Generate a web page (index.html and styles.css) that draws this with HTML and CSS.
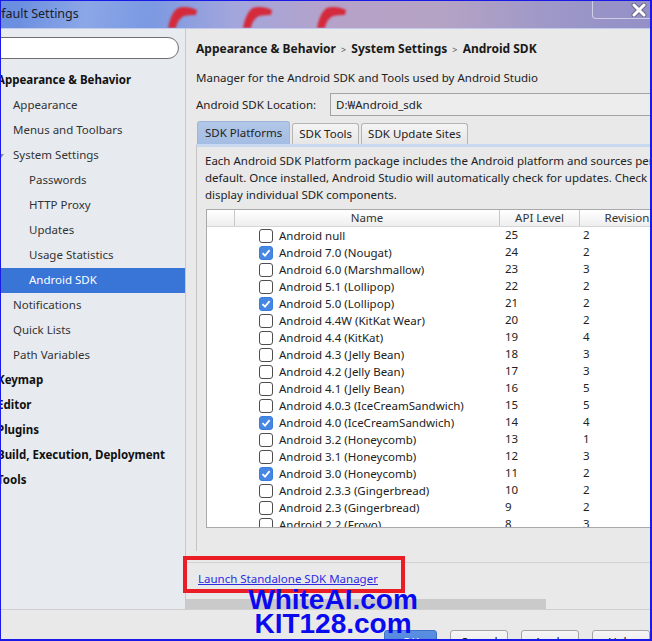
FILE: index.html
```html
<!DOCTYPE html>
<html lang="en">
<head>
    <meta charset="UTF-8">
    <title>Default Settings</title>
    <link rel="stylesheet" href="styles.css">
</head>
<body>
    <div class="window">
        <div class="titlebar">
            <svg class="birds" width="652" height="28" viewBox="0 0 652 28">
                <defs>
                    <filter id="soft"><feGaussianBlur stdDeviation="1"/></filter>
                    <path id="bird" d="M30 9 C24 6 16 5 11 7 C6 10 3 17 1 27 L9 27 C10 21 13 17 17 15 C21 14 25 14 29 14 Z"/>
                </defs>
                <g fill="#d42a3a" filter="url(#soft)">
                    <use href="#bird" x="166"/>
                    <use href="#bird" x="241"/>
                    <use href="#bird" x="315"/>
                </g>
            </svg>
            <span class="title">Default Settings</span>
            <div class="close">
                <svg width="20" height="14" viewBox="0 0 20 14">
                    <path d="M5 2 L15 12 M15 2 L5 12" stroke="#6b6b8a" stroke-width="5" stroke-linecap="round"/>
                    <path d="M5 2 L15 12 M15 2 L5 12" stroke="#ffffff" stroke-width="3" stroke-linecap="round"/>
                </svg>
            </div>
        </div>

        <div class="main">
            <div class="sidebar">
                <div class="search"></div>
                <div class="tree">
                    <div class="node top">Appearance &amp; Behavior</div>
                    <div class="node lvl1">Appearance</div>
                    <div class="node lvl1">Menus and Toolbars</div>
                    <div class="node lvl1"><span class="arrow"></span>System Settings</div>
                    <div class="node lvl2">Passwords</div>
                    <div class="node lvl2">HTTP Proxy</div>
                    <div class="node lvl2">Updates</div>
                    <div class="node lvl2">Usage Statistics</div>
                    <div class="node lvl2 selected">Android SDK</div>
                    <div class="node lvl1">Notifications</div>
                    <div class="node lvl1">Quick Lists</div>
                    <div class="node lvl1">Path Variables</div>
                    <div class="node top">Keymap</div>
                    <div class="node top">Editor</div>
                    <div class="node top">Plugins</div>
                    <div class="node top">Build, Execution, Deployment</div>
                    <div class="node top">Tools</div>
                </div>
            </div>

            <div class="content">
                <div class="crumb">Appearance &amp; Behavior <span class="sep">&gt;</span> System Settings <span class="sep">&gt;</span> Android SDK</div>
                <div class="desc">Manager for the Android SDK and Tools used by Android Studio</div>
                <div class="location">
                    <span class="loc-label">Android SDK Location:</span>
                    <div class="loc-input">D:₩Android_sdk</div>
                </div>
                <div class="tabs">
                    <div class="tab active">SDK Platforms</div>
                    <div class="tab">SDK Tools</div>
                    <div class="tab">SDK Update Sites</div>
                </div>
                <div class="panel">
                    <div class="panel-text">
                        Each Android SDK Platform package includes the Android platform and sources pertaining to an API level by<br>
                        default. Once installed, Android Studio will automatically check for updates. Check "show package details" to<br>
                        display individual SDK components.
                    </div>
                    <div class="table">
                        <div class="thead">
                            <div class="th"></div>
                            <div class="th">Name</div>
                            <div class="th">API Level</div>
                            <div class="th">Revision</div>
                        </div>
                        <div class="tbody" id="rows"></div>
                    </div>
                </div>
                <div class="link-row">
                    <a class="link" href="#">Launch Standalone SDK Manager</a>
                </div>
                <div class="hbar"></div>
            </div>
        </div>

        <div class="footer">
            <button class="btn primary">OK</button>
            <button class="btn">Cancel</button>
            <button class="btn">Apply</button>
            <button class="btn">Help</button>
        </div>

        <div class="highlight"></div>
        <div class="watermark">WhiteAI.com<br>KIT128.com</div>
    </div>

    <script>
        // 平台列表
        const platforms = [
            ['Android null', 25, 2, false],
            ['Android 7.0 (Nougat)', 24, 2, true],
            ['Android 6.0 (Marshmallow)', 23, 3, false],
            ['Android 5.1 (Lollipop)', 22, 2, false],
            ['Android 5.0 (Lollipop)', 21, 2, true],
            ['Android 4.4W (KitKat Wear)', 20, 2, false],
            ['Android 4.4 (KitKat)', 19, 4, false],
            ['Android 4.3 (Jelly Bean)', 18, 3, false],
            ['Android 4.2 (Jelly Bean)', 17, 3, false],
            ['Android 4.1 (Jelly Bean)', 16, 5, false],
            ['Android 4.0.3 (IceCreamSandwich)', 15, 5, false],
            ['Android 4.0 (IceCreamSandwich)', 14, 4, true],
            ['Android 3.2 (Honeycomb)', 13, 1, false],
            ['Android 3.1 (Honeycomb)', 12, 3, false],
            ['Android 3.0 (Honeycomb)', 11, 2, true],
            ['Android 2.3.3 (Gingerbread)', 10, 2, false],
            ['Android 2.3 (Gingerbread)', 9, 2, false],
            ['Android 2.2 (Froyo)', 8, 3, false]
        ];

        const tick = '<svg width="10" height="10" viewBox="0 0 10 10"><path d="M1.5 5.2 L4 7.6 L8.6 2.2" fill="none" stroke="#fff" stroke-width="1.8"/></svg>';
        const rows = document.getElementById('rows');

        platforms.forEach(([name, api, rev, checked]) => {
            const row = document.createElement('div');
            row.className = 'tr';
            row.innerHTML = `
                <div class="td"></div>
                <div class="td name"><span class="check${checked ? ' on' : ''}">${checked ? tick : ''}</span>${name}</div>
                <div class="td api">${api}</div>
                <div class="td rev">${rev}</div>`;
            rows.appendChild(row);
        });
    </script>
</body>
</html>
```

FILE: styles.css
```css
* {
    box-sizing: border-box;
}

body {
    margin: 0;
    font-family: "Noto Sans", "Noto Sans CJK KR", sans-serif;
    font-size: 11.5px;
    color: #222;
}

.window {
    position: relative;
    width: 652px;
    height: 641px;
    border-top: 1px solid #1a1ae8;
    border-left: 1px solid #1a1ae8;
    border-right: 2px solid #1a1ae8;
    border-bottom: 2px solid #1a1ae8;
    display: flex;
    flex-direction: column;
    overflow: hidden;
    background-color: #e9e9e9;
}

/* 标题栏 */
.titlebar {
    position: relative;
    height: 28px;
    flex-shrink: 0;
    background: linear-gradient(90deg, #6a8ee0 0%, #7898e2 22%, #a3a6dc 36%, #b6a2c8 52%, #b5a3c4 68%, #9d98c8 85%, #948fc6 100%);
    border-bottom: 1px solid #c2cbeb;
    display: flex;
    align-items: center;
    overflow: hidden;
}

.titlebar::before {
    content: "";
    position: absolute;
    left: 20px;
    top: 0;
    width: 130px;
    height: 28px;
    background: linear-gradient(100deg, transparent 0%, rgba(255, 255, 255, 0.18) 50%, transparent 100%);
}

.birds {
    position: absolute;
    left: 0;
    top: 0;
}

.title {
    position: relative;
    margin-left: -16px;
    margin-top: -3px;
    font-size: 12.5px;
    color: #1c1c2a;
}

.close {
    position: absolute;
    right: -2px;
    top: -1px;
    width: 60px;
    height: 19px;
    border-left: 1px solid rgba(255, 255, 255, 0.55);
    border-bottom: 1px solid rgba(255, 255, 255, 0.55);
    border-bottom-left-radius: 4px;
    display: flex;
    justify-content: flex-end;
    align-items: center;
    padding-right: 3px;
    padding-top: 2px;
}

.main {
    flex: 1;
    display: flex;
    min-height: 0;
}

/* 左侧设置树 */
.sidebar {
    width: 185px;
    flex-shrink: 0;
    background-color: #e7ebef;
    border-right: 1px solid #c6c8cb;
    padding-top: 8px;
    overflow: hidden;
}

.search {
    margin-left: -20px;
    width: 198px;
    height: 22px;
    background-color: #fff;
    border: 1px solid #6e6e6e;
    border-radius: 11px;
    margin-bottom: 9px;
}

.node {
    position: relative;
    height: 25px;
    line-height: 24px;
    white-space: nowrap;
    color: #333;
}

.node.top {
    margin-left: -4px;
    font-weight: bold;
    color: #111;
}

.node.lvl1 {
    padding-left: 12px;
}

.node.lvl2 {
    padding-left: 28px;
}

.node.selected {
    background-color: #3875d7;
    color: #fff;
}

.arrow {
    position: absolute;
    left: -3px;
    top: 11px;
    border-left: 3px solid transparent;
    border-right: 3px solid transparent;
    border-top: 4px solid #8a8a8a;
}

/* 右侧内容 */
.content {
    flex: 1;
    min-width: 0;
    display: flex;
    flex-direction: column;
    overflow: hidden;
    background-color: #e9e9e9;
}

.crumb {
    padding: 11px 0 0 10px;
    line-height: 18px;
    font-size: 12px;
    font-weight: bold;
    color: #1a1a1a;
    white-space: nowrap;
}

.crumb .sep {
    font-weight: normal;
    font-size: 9px;
    margin: 0 2px;
    color: #555;
}

.desc {
    margin-top: 10px;
    padding-left: 10px;
    line-height: 17px;
    white-space: nowrap;
}

.location {
    margin-top: 7px;
    padding-left: 10px;
    height: 23px;
    display: flex;
    align-items: center;
}

.loc-label {
    width: 134px;
    flex-shrink: 0;
    white-space: nowrap;
}

.loc-input {
    width: 340px;
    flex-shrink: 0;
    height: 23px;
    line-height: 21px;
    padding-left: 5px;
    background-color: #ededed;
    border: 1px solid #a3a3a3;
}

.tabs {
    margin-top: 5px;
    padding-left: 11px;
    display: flex;
    align-items: flex-end;
    height: 23px;
    gap: 2px;
}

.tab {
    height: 21px;
    line-height: 20px;
    padding: 0 6px;
    border: 1px solid #b4b4b4;
    border-bottom: none;
    border-radius: 3px 3px 0 0;
    background: linear-gradient(#f4f4f4, #e6e6e6);
    white-space: nowrap;
}

.tab.active {
    height: 23px;
    line-height: 22px;
    padding: 0 7px;
    border-color: #9fb6da;
    background: linear-gradient(#b3c8e8, #a4bde2);
}

.panel {
    flex: 1;
    min-height: 0;
    margin-left: 10px;
    border-left: 1px solid #c4c4c4;
    border-top: 3px solid #c8d8f0;
    padding: 5px 0 0 8px;
    overflow: hidden;
}

.panel-text {
    line-height: 17px;
    white-space: nowrap;
}

/* 平台表格 */
.table {
    margin-top: 6px;
    margin-left: 1px;
    width: 470px;
    height: 319px;
    border: 1px solid #a9a9a9;
    background-color: #fff;
    overflow: hidden;
}

.thead,
.tr {
    display: grid;
    grid-template-columns: 28px 265px 80px 1fr;
}

.thead {
    height: 17px;
    background: linear-gradient(#ffffff, #eeeeee);
    border-bottom: 1px solid #d5d5d5;
}

.th {
    line-height: 16px;
    text-align: center;
    color: #333;
    border-right: 1px solid #c7c7c7;
}

.tbody {
    height: 300px;
    overflow: hidden;
}

.tr {
    height: 17px;
    line-height: 16px;
}

.td {
    white-space: nowrap;
}

.td.name {
    padding-left: 24px;
    display: flex;
    align-items: center;
}

.td.api {
    padding-left: 5px;
}

.td.rev {
    padding-left: 3px;
}

.check {
    width: 14px;
    height: 14px;
    margin-right: 6px;
    border: 1px solid #4e4e4e;
    border-radius: 3px;
    background-color: #fff;
    display: flex;
    align-items: center;
    justify-content: center;
}

.check.on {
    border-color: #3a7ddc;
    background-color: #4587e2;
}

.link-row {
    margin-top: 11px;
    border-top: 1px solid #d2d2d2;
    height: 37px;
    padding: 7px 0 0 12px;
    line-height: 17px;
}

.link {
    color: #2b2be6;
    text-decoration: underline;
    white-space: nowrap;
}

.hbar {
    width: 360px;
    height: 10px;
    flex-shrink: 0;
    background-color: #cacaca;
}

/* 底部按钮 */
.footer {
    height: 30px;
    flex-shrink: 0;
    border-top: 1px solid #cfcfcf;
    background-color: #e9e9e9;
    display: flex;
    justify-content: flex-end;
    align-items: flex-start;
    gap: 13px;
    padding: 20px 0 0 0;
}

.btn {
    width: 58px;
    height: 25px;
    border: 1px solid #a4a4a4;
    border-radius: 3px;
    background: linear-gradient(#f6f6f6, #e4e4e4);
    font-family: "Noto Sans", sans-serif;
    font-size: 12px;
    color: #222;
    padding: 0;
}

.btn.primary {
    width: 53px;
    border-color: #3f73c9;
    background: linear-gradient(#5b8fe2, #4a7fd8);
    color: #fff;
}

/* 覆盖层 */
.highlight {
    position: absolute;
    left: 182px;
    top: 555px;
    width: 222px;
    height: 37px;
    border: 4px solid #ea1c24;
}

.watermark {
    position: absolute;
    left: 240px;
    top: 587px;
    width: 184px;
    text-align: center;
    font-family: "Liberation Sans", Arial, sans-serif;
    font-weight: bold;
    font-size: 28px;
    line-height: 24px;
    color: #0a0aee;
}
```
